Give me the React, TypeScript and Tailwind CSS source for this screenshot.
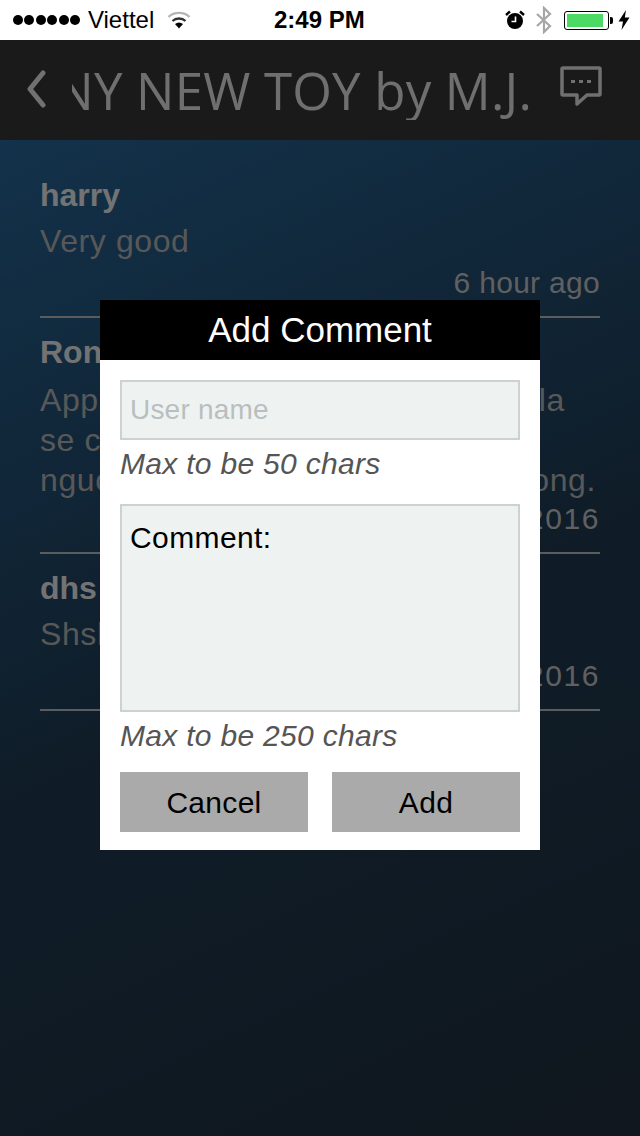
const sans = "font-['Liberation_Sans',Arial,sans-serif]";

const comments = [
  {
    name: "harry",
    lines: ["Very good"],
    time: "6 hour ago",
    rowClass: "pt-0",
    bodyClass: "mt-[6px] leading-[42px]",
    timeClass: "mt-[2px] tracking-[0.3px]",
  },
  {
    name: "Ronaldo",
    lines: ["Apple app hay lam nha cac em w la", "se co nhieu phien ban moi cho", "nguoi dung trong thoi gian say khong."],
    time: "12/01/2016",
    rowClass: "pt-[15px]",
    bodyClass: "mt-[9px] leading-[40px]",
    timeClass: "mt-0 tracking-[1.6px]",
  },
  {
    name: "dhs",
    lines: ["Shshsh"],
    time: "10/01/2016",
    rowClass: "pt-[15px]",
    bodyClass: "mt-[6px] leading-[42px]",
    timeClass: "mt-[2px] tracking-[1.6px]",
  },
];

function WifiIcon() {
  return (
    <svg width="24" height="20" viewBox="0 0 24 20" className="ml-[13px]">
      <path d="M1.5 7 C7 1.5 17 1.5 22.5 7" fill="none" stroke="#b5b5b5" strokeWidth="2.4" />
      <path d="M5.5 11 C9 7.6 15 7.6 18.5 11" fill="none" stroke="#333" strokeWidth="2.4" />
      <path d="M8 14 C10.5 12 13.5 12 16 14 L12 18.5 Z" fill="#000" />
    </svg>
  );
}

function AlarmIcon() {
  return (
    <svg width="20" height="20" viewBox="0 0 20 20" className="mr-[10px]">
      <circle cx="10" cy="11" r="8" fill="#000" />
      <path d="M1 5 L5 1.5 M19 5 L15 1.5" stroke="#000" strokeWidth="2.4" />
      <path d="M10.5 6.5 V11.5 H6.5" fill="none" stroke="#fff" strokeWidth="1.6" />
    </svg>
  );
}

function BluetoothIcon() {
  return (
    <svg width="18" height="28" viewBox="0 0 18 28" className="mr-[11px]">
      <path d="M2 8 L15 20 L9 26 V2 L15 8 L2 20" fill="none" stroke="#a6a6a6" strokeWidth="2.2" />
    </svg>
  );
}

function Battery() {
  return (
    <div className="flex items-center">
      <div className="flex h-[19px] w-[45px] rounded-[3px] border border-black p-[2px]">
        <div className="h-full w-[36px] bg-[#4cd964]" />
      </div>
      <div className="ml-[1px] h-[7px] w-[3px] rounded-r-[2px] bg-black" />
    </div>
  );
}

function BoltIcon() {
  return (
    <svg width="12" height="20" viewBox="0 0 12 20" className="ml-[5px]">
      <path d="M8 0 L0.5 11.5 H5 L3.5 20 L11.5 7.5 H6.8 Z" fill="#000" />
    </svg>
  );
}

function StatusBar() {
  return (
    <div className={`relative z-20 flex h-10 items-center bg-white pl-[13px] pr-[10px] text-black ${sans}`}>
      <div className="flex w-[250px] items-center">
        <div className="flex gap-[1.4px]">
          {[0, 1, 2, 3, 4, 5].map((i) => (
            <span key={i} className="size-[10px] rounded-full bg-black" />
          ))}
        </div>
        <span className="ml-[8px] text-[24px] leading-none">Viettel</span>
        <WifiIcon />
      </div>
      <span className="ml-[11px] text-[24px] font-bold leading-none">2:49 PM</span>
      <div className="ml-auto flex items-center">
        <AlarmIcon />
        <BluetoothIcon />
        <Battery />
        <BoltIcon />
      </div>
    </div>
  );
}

function NavBar() {
  return (
    <div className="flex h-[100px] items-center bg-[#343434] pl-[26px]">
      <svg width="20" height="38" viewBox="0 0 20 38" className="mb-[2px] shrink-0">
        <path d="M17 3 L4 19 L17 35" fill="none" stroke="#e2e2e2" strokeWidth="5" strokeLinecap="round" strokeLinejoin="round" />
      </svg>
      <div className="ml-[26px] flex w-[460px] shrink-0 justify-end overflow-hidden">
        <span className="whitespace-nowrap font-['Open_Sans',sans-serif] text-[51px] leading-[60px] tracking-[0.2px] text-[#dedede]">
          ANY NEW TOY by M.J.
        </span>
      </div>
      <svg width="42" height="42" viewBox="0 0 42 42" className="mb-[6px] ml-[28px] shrink-0">
        <path
          d="M3 2 H39 A1 1 0 0 1 40 3 V28 A1 1 0 0 1 39 29 H27 L17 38 V29 H3 A1 1 0 0 1 2 28 V3 A1 1 0 0 1 3 2 Z"
          fill="none"
          stroke="#e0e0e0"
          strokeWidth="3.5"
          strokeLinejoin="round"
        />
        <path d="M11 15.5 H15 M19 15.5 H23 M27 15.5 H31" stroke="#e0e0e0" strokeWidth="3" />
      </svg>
    </div>
  );
}

function CommentList() {
  return (
    <div className={`flex-1 bg-[linear-gradient(155deg,#266496_0%,#1e3a52_50%,#202e3c_100%)] px-10 pt-9 ${sans}`}>
      {comments.map((c) => (
        <div key={c.name} className={`border-b-2 border-[#b4b8bc] pb-[14px] ${c.rowClass}`}>
          <div className="text-[32px] font-bold leading-[38px] text-[#e6e6e6]">{c.name}</div>
          <div className={`text-[32px] tracking-[0.6px] text-[#b0b0b0] ${c.bodyClass}`}>
            {c.lines.map((line) => (
              <div key={line} className="whitespace-nowrap">{line}</div>
            ))}
          </div>
          <div className={`text-right text-[30px] leading-[38px] text-[#c0c0c0] ${c.timeClass}`}>{c.time}</div>
        </div>
      ))}
    </div>
  );
}

function AddCommentDialog() {
  return (
    <div className="absolute inset-x-0 bottom-0 top-10 z-10 flex justify-center bg-black/50 pt-[260px]">
      <div className={`h-[550px] w-[440px] bg-white ${sans}`}>
        <div className="flex h-[60px] items-center justify-center bg-black text-[35px] text-white">Add Comment</div>
        <div className="flex flex-col px-5 pt-5">
          <input
            placeholder="User name"
            className="h-[60px] border-2 border-[#cdd1d0] bg-[#eef3f2] px-2 text-[28px] tracking-[0.2px] text-black outline-none placeholder:text-[#b8bfbe]"
          />
          <p className="mt-[6px] text-[30px] italic leading-[36px] tracking-[0.3px] text-[#555]">Max to be 50 chars</p>
          <textarea
            defaultValue="Comment:"
            className="mt-[22px] h-[208px] resize-none border-2 border-[#cdd1d0] bg-[#eef3f2] px-2 pt-[15px] text-[30px] leading-[34px] tracking-[0.4px] text-black outline-none"
          />
          <p className="mt-[6px] text-[30px] italic leading-[36px] tracking-[0.3px] text-[#555]">Max to be 250 chars</p>
          <div className="mt-[18px] grid grid-cols-2 gap-6">
            <button className="h-[60px] bg-[#aaaaaa] text-[30px] tracking-[0.3px] text-black">Cancel</button>
            <button className="h-[60px] bg-[#aaaaaa] text-[30px] tracking-[0.3px] text-black">Add</button>
          </div>
        </div>
      </div>
    </div>
  );
}

export default function App() {
  return (
    <div className="relative flex h-[1136px] w-[640px] flex-col overflow-hidden">
      <StatusBar />
      <NavBar />
      <CommentList />
      <AddCommentDialog />
    </div>
  );
}
